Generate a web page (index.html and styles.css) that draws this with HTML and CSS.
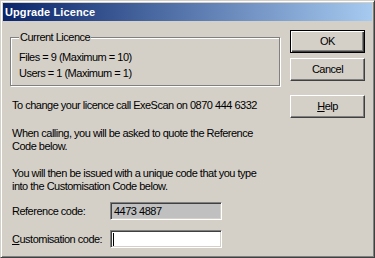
FILE: index.html
```html
<!DOCTYPE html>
<html>
<head>
<meta charset="utf-8">
<link rel="stylesheet" href="styles.css">
</head>
<body>
<div class="window">
  <div class="titlebar"><span class="title">Upgrade Licence</span></div>
  <div class="client">
    <div class="main">
      <fieldset class="group">
        <legend class="legend">Current Licence</legend>
        <div class="gline">Files = 9 (Maximum = 10)</div>
        <div class="gline">Users = 1 (Maximum = 1)</div>
      </fieldset>
      <p class="para p1">To change your licence call ExeScan on 0870 444 6332</p>
      <p class="para p2">When calling, you will be asked to quote the Reference<br>Code below.</p>
      <p class="para p3">You will then be issued with a unique code that you type<br>into the Customisation Code below.</p>
      <div class="row r1">
        <span class="label">Reference code:</span>
        <span class="field readonly">4473 4887</span>
      </div>
      <div class="row r2">
        <span class="label"><u>C</u>ustomisation code:</span>
        <span class="field edit"><span class="caret"></span></span>
      </div>
    </div>
    <div class="buttons">
      <div class="btn default">OK</div>
      <div class="btn">Cancel</div>
      <div class="btn help"><u>H</u>elp</div>
    </div>
  </div>
</div>
</body>
</html>
```
FILE: styles.css
```css
html, body {
  margin: 0;
  padding: 0;
  background: #d4d0c8;
}
body {
  font-family: "Liberation Sans", Arial, sans-serif;
  font-size: 11px;
  letter-spacing: -0.5px;
  color: #000;
}
.window {
  box-sizing: border-box;
  width: 375px;
  height: 258px;
  border: 1px solid;
  border-color: #d4d0c8 #404040 #404040 #d4d0c8;
  box-shadow: inset 1px 1px #fff, inset -1px -1px #808080;
  padding: 2px;
  background: #d4d0c8;
  display: flex;
  flex-direction: column;
}
.titlebar {
  height: 18px;
  background: linear-gradient(to right, #0a246a, #a6caf0);
  display: flex;
  align-items: center;
  padding-left: 2px;
}
.title {
  color: #fff;
  font-weight: bold;
  font-size: 11px;
  letter-spacing: 0.1px;
  line-height: 13px;
}
.client {
  flex: 1;
  display: flex;
  padding-top: 1px;
}
.main {
  margin-left: 7px;
  width: 270px;
}
.group {
  margin: 9px 0 0 0;
  padding: 5px 0 4px 8px;
  border: 1px solid #808080;
  box-shadow: 1px 1px 0 #fff, inset 1px 1px 0 #fff;
  min-width: 0;
}
.legend {
  padding: 0 1px;
  line-height: 13px;
  background: #d4d0c8;
}
.gline {
  line-height: 16px;
  white-space: nowrap;
}
.para {
  margin: 0;
  padding-left: 2px;
  line-height: 13px;
  white-space: nowrap;
}
.p1 { margin-top: 13px; }
.p2 { margin-top: 15px; }
.p3 { margin-top: 14px; }
.row {
  display: flex;
  align-items: center;
  padding-left: 2px;
}
.r1 { margin-top: 9px; }
.r2 { margin-top: 10px; }
.label {
  width: 98px;
  flex: none;
  white-space: nowrap;
  line-height: 13px;
}
.field {
  box-sizing: border-box;
  width: 112px;
  height: 18px;
  flex: none;
  border: 1px solid;
  border-color: #808080 #fff #fff #808080;
  box-shadow: inset 1px 1px #404040, inset -1px -1px #d4d0c8;
  padding: 2px 3px;
  line-height: 13px;
  display: flex;
  align-items: center;
}
.readonly { background: #c0c0c0; }
.edit { background: #fff; padding-left: 2px; }
.caret {
  width: 1px;
  height: 13px;
  background: #000;
}
.buttons {
  margin-left: 10px;
  display: flex;
  flex-direction: column;
  padding-top: 8px;
}
.btn {
  box-sizing: border-box;
  width: 75px;
  height: 23px;
  border: 1px solid;
  border-color: #fff #404040 #404040 #fff;
  box-shadow: inset -1px -1px #808080;
  display: flex;
  align-items: center;
  justify-content: center;
  line-height: 13px;
  margin-bottom: 5px;
}
.btn.default {
  border-color: #000;
  box-shadow: inset 1px 1px #fff, inset -1px -1px #404040, inset -2px -2px #808080;
}
.btn.help { margin-top: 9px; }
```
